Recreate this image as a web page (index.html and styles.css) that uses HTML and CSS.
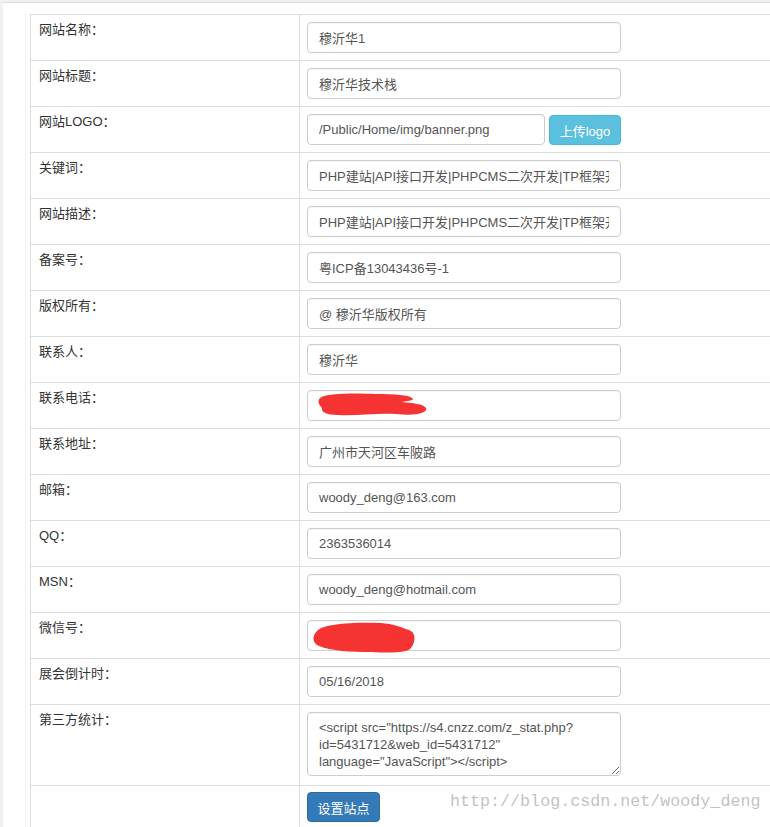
FILE: index.html
```html
<!DOCTYPE html>
<html lang="zh-CN">
<head>
<meta charset="utf-8">
<title>站点设置</title>
<link rel="stylesheet" href="styles.css">
</head>
<body>
<div class="panel">
  <div class="inner">
    <div class="form-table">
      <div class="row"><div class="label">网站名称：</div><div class="field"><input class="ctl" value="穆沂华1"></div></div>
      <div class="row"><div class="label">网站标题：</div><div class="field"><input class="ctl" value="穆沂华技术栈"></div></div>
      <div class="row"><div class="label">网站LOGO：</div><div class="field logo-field"><input class="ctl ctl-logo" value="/Public/Home/img/banner.png"><button class="btn btn-info">上传logo</button></div></div>
      <div class="row"><div class="label">关键词：</div><div class="field"><input class="ctl" value="PHP建站|API接口开发|PHPCMS二次开发|TP框架开发"></div></div>
      <div class="row"><div class="label">网站描述：</div><div class="field"><input class="ctl" value="PHP建站|API接口开发|PHPCMS二次开发|TP框架开发"></div></div>
      <div class="row"><div class="label">备案号：</div><div class="field"><input class="ctl" value="粤ICP备13043436号-1"></div></div>
      <div class="row"><div class="label">版权所有：</div><div class="field"><input class="ctl" value="@ 穆沂华版权所有"></div></div>
      <div class="row"><div class="label">联系人：</div><div class="field"><input class="ctl" value="穆沂华"></div></div>
      <div class="row"><div class="label">联系电话：</div><div class="field"><div class="masked"><input class="ctl" value=""><svg class="blot blot-phone" width="112" height="26" viewBox="0 0 112 26"><path d="M4 6 C10 1, 40 1, 60 2 C80 2, 92 3, 96 6 C100 8, 92 9, 86 10 C96 11, 108 12, 110 16 C112 21, 100 24, 80 22 C60 21, 40 24, 22 23 C10 23, 5 20, 6 16 C3 13, 1 9, 4 6 Z" fill="#f63333"/></svg></div></div></div>
      <div class="row"><div class="label">联系地址：</div><div class="field"><input class="ctl" value="广州市天河区车陂路"></div></div>
      <div class="row"><div class="label">邮箱：</div><div class="field"><input class="ctl" value="woody_deng@163.com"></div></div>
      <div class="row"><div class="label">QQ：</div><div class="field"><input class="ctl" value="2363536014"></div></div>
      <div class="row"><div class="label">MSN：</div><div class="field"><input class="ctl" value="woody_deng@hotmail.com"></div></div>
      <div class="row"><div class="label">微信号：</div><div class="field"><div class="masked"><input class="ctl" value=""><svg class="blot blot-wx" width="106" height="33" viewBox="0 0 106 33"><path d="M6 10 C12 3, 40 1, 70 2 C82 3, 90 6, 98 9 C106 12, 104 22, 100 27 C96 32, 80 32, 60 31 C40 31, 20 30, 8 25 C1 22, 1 15, 6 10 Z" fill="#f63333"/></svg></div></div></div>
      <div class="row"><div class="label">展会倒计时：</div><div class="field"><input class="ctl" value="05/16/2018"></div></div>
      <div class="row row-tall"><div class="label">第三方统计：</div><div class="field"><textarea class="ctl ctl-area">&lt;script src="https://s4.cnzz.com/z_stat.php?id=5431712&amp;web_id=5431712" language="JavaScript"&gt;&lt;/script&gt;</textarea></div></div>
      <div class="row row-last"><div class="label"></div><div class="field field-btn"><button class="btn btn-primary">设置站点</button></div></div>
    </div>
  </div>
  <div class="watermark">http://blog.csdn.net/woody_deng</div>
</div>
</body>
</html>
```

FILE: styles.css
```css
html, body {
  margin: 0;
  padding: 0;
}
body {
  background: #f1f1f1;
  width: 770px;
  height: 827px;
  overflow: hidden;
  font-family: "Liberation Sans", "Noto Sans CJK SC", sans-serif;
  font-size: 13px;
  color: #333;
}
.panel {
  position: relative;
  box-sizing: border-box;
  margin: 2px 0 0 3px;
  width: 767px;
  height: 825px;
  background: #fff;
  border-top: 1px solid #dcdcdc;
  padding: 11px 0 0 22px;
  overflow: hidden;
}
.inner {
  border-left: 1px solid #f0f0f0;
  padding-left: 4px;
  height: 100%;
}
.form-table {
  width: 740px;
  border-top: 1px solid #ddd;
  border-left: 1px solid #ddd;
}
.row {
  display: flex;
  border-bottom: 1px solid #ddd;
}
.label {
  width: 260px;
  flex: none;
  border-right: 1px solid #ddd;
  padding: 7px 0 0 8px;
  line-height: 16px;
  color: #333;
}
.field {
  flex: 1;
  padding: 7px 8px 7px 7px;
}
.logo-field {
  display: flex;
  gap: 4px;
}
.ctl {
  display: block;
  box-sizing: border-box;
  width: 314px;
  height: 31px;
  margin: 0;
  padding: 0 11px;
  border: 1px solid #ccc;
  border-radius: 4px;
  background: #fff;
  font-family: "Liberation Sans", "Noto Sans CJK SC", sans-serif;
  font-size: 13px;
  color: #555;
  box-shadow: inset 0 1px 1px rgba(0,0,0,0.04);
  overflow: hidden;
}
.ctl-logo {
  width: 238px;
}
.ctl-area {
  height: 64px;
  padding: 6px 11px;
  line-height: 17px;
  resize: vertical;
}
.row-tall .field {
  padding-bottom: 9px;
}
.row-last {
  border-bottom: none;
  height: 41px;
}
.field-btn {
  padding-top: 6px;
}
.btn {
  box-sizing: border-box;
  height: 30px;
  border-radius: 4px;
  color: #fff;
  font-family: "Liberation Sans", "Noto Sans CJK SC", sans-serif;
  font-size: 13px;
  padding: 0;
  white-space: nowrap;
  text-align: center;
  cursor: pointer;
}
.btn-info {
  width: 72px;
  background: #5bc0de;
  border: 1px solid #46b8da;
  margin-top: 1px;
}
.btn-primary {
  width: 73px;
  background: #337ab7;
  border: 1px solid #2e6da4;
}
.masked {
  position: relative;
  width: 314px;
}
.blot {
  position: absolute;
  display: block;
}
.blot-phone {
  left: 9px;
  top: 2px;
}
.blot-wx {
  left: 4px;
  top: 1px;
}
.watermark {
  position: absolute;
  left: 447px;
  top: 789px;
  font-family: "Liberation Mono", monospace;
  font-size: 16.7px;
  color: rgba(140,140,140,0.55);
  white-space: nowrap;
}
```
